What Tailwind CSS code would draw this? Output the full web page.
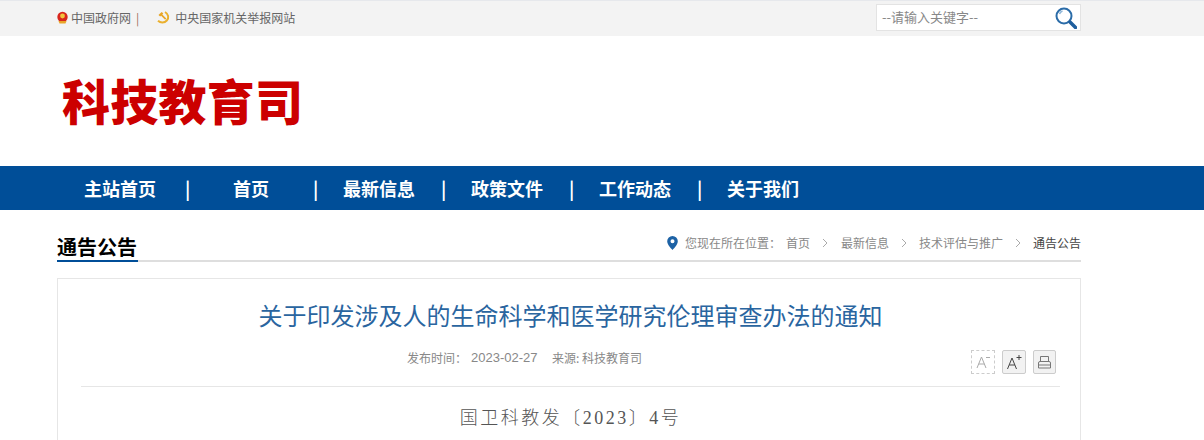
<!DOCTYPE html>
<html lang="zh-CN">
<head>
  <meta charset="UTF-8">
  <title>科技教育司</title>
  <script src="https://cdn.jsdelivr.net/npm/@tailwindcss/browser@4"></script>
</head>
<body class="bg-white overflow-hidden h-[440px] font-['Noto_Sans_CJK_SC','Liberation_Sans',sans-serif]">

  <!-- top bar -->
  <div class="h-9 bg-[#f3f3f3] border-t border-[#e6e8ec]">
    <div class="w-[1024px] ml-[57px] h-[35px] flex items-start justify-between">
      <div class="flex items-center text-xs text-[#666] h-[33px]">
        <svg class="w-[11px] h-[13px] mr-[3px]" viewBox="0 0 11 13">
          <circle cx="5.500" cy="6" r="5.200" fill="#d8261c"/>
          <circle cx="5.500" cy="5" r="2.400" fill="#f3c33c"/>
          <path d="M1.500 10h8l-1 2.500h-6z" fill="#e9a52a"/>
        </svg>
        <span>中国政府网</span>
        <span class="ml-[5px] text-[#a0705a]">|</span>
        <svg class="w-[13px] h-[13px] ml-[18px] mr-[5px]" viewBox="0 0 13 13" fill="none">
          <path d="M8 1c3.500 2 4.200 6 1.800 8.500C7.500 12 3.500 12 1 9.800" stroke="#eab02e" stroke-width="2"/>
          <path d="M3 2.500l1.800-1.500 1.500 1.500-1 1 4 4-1.200 1.200-4-4-1 .8L1.500 4z" fill="#e8a526"/>
        </svg>
        <span>中央国家机关举报网站</span>
      </div>
      <div class="mt-[3px] w-[205px] h-[27px] bg-white border border-[#e3e3e3] flex items-center justify-between pl-[5px] pr-[3px]">
        <span class="text-[13px] text-[#888] -mt-[2px]">--请输入关键字--</span>
        <svg class="w-[22px] h-[22px]" viewBox="0 0 22 22" fill="none">
          <circle cx="9" cy="9" r="7.500" stroke="#2b6ca8" stroke-width="2"/>
          <path d="M4.500 7a5 5 0 0 1 3-3" stroke="#8fb6d8" stroke-width="1.500"/>
          <path d="M15 15l5.500 5.500" stroke="#1f5f9e" stroke-width="3.500" stroke-linecap="round"/>
        </svg>
      </div>
    </div>
  </div>

  <!-- site title -->
  <div class="h-[130px] flex items-center pl-[62px]">
    <h1 class="text-5xl leading-none font-black text-[#cc0000] tracking-[0.25px] -mt-[4px]">科技教育司</h1>
  </div>

  <!-- nav -->
  <nav class="h-11 bg-[#004e98]">
    <ul class="flex ml-[56px] h-full items-center text-white font-bold text-lg">
      <li class="w-[128px] text-center leading-[22px] relative">主站首页<span class="absolute left-[129px] top-0 font-bold">|</span></li>
      <li class="w-[128px] text-center leading-[22px] relative left-[3px]">首页<span class="absolute left-[126px] top-0 font-bold">|</span></li>
      <li class="w-[128px] text-center leading-[22px] relative left-[3px]">最新信息<span class="absolute left-[126px] top-0 font-bold">|</span></li>
      <li class="w-[128px] text-center leading-[22px] relative left-[3px]">政策文件<span class="absolute left-[126px] top-0 font-bold">|</span></li>
      <li class="w-[128px] text-center leading-[22px] relative left-[3px]">工作动态<span class="absolute left-[126px] top-0 font-bold">|</span></li>
      <li class="w-[128px] text-center leading-[22px] relative left-[3px]">关于我们</li>
    </ul>
  </nav>

  <div class="w-[1024px] ml-[57px]">
    <!-- section head + breadcrumb -->
    <div class="h-[52px] border-b-2 border-[#dedede] flex items-end justify-between">
      <h2 class="text-xl leading-[26px] font-bold text-black border-b-2 border-[#004e98] -mb-[2px] w-[81px] whitespace-nowrap">通告公告</h2>
      <div class="flex items-center text-xs text-[#888] mb-[9px] whitespace-nowrap">
        <svg class="w-[11px] h-[14px] mr-[7px]" viewBox="0 0 11 14">
          <path fill-rule="evenodd" d="M5.500 0A5.300 5.300 0 0 0 .2 5.300C.2 9 5.500 14 5.500 14s5.300-5 5.300-8.700A5.300 5.300 0 0 0 5.500 0zm0 7.200a2 2 0 1 1 0-4 2 2 0 0 1 0 4z" fill="#1d62a5"/>
        </svg>
        <span>您现在所在位置：</span>
        <span class="ml-[5px]">首页</span>
        <span class="w-[31px] flex justify-center"><svg class="w-[6px] h-[10px]" viewBox="0 0 6 10" fill="none" stroke="#aaa"><path d="M1 1l4 4-4 4"/></svg></span>
        <span>最新信息</span>
        <span class="w-[30px] flex justify-center"><svg class="w-[6px] h-[10px]" viewBox="0 0 6 10" fill="none" stroke="#aaa"><path d="M1 1l4 4-4 4"/></svg></span>
        <span>技术评估与推广</span>
        <span class="w-[30px] flex justify-center"><svg class="w-[6px] h-[10px]" viewBox="0 0 6 10" fill="none" stroke="#aaa"><path d="M1 1l4 4-4 4"/></svg></span>
        <span class="text-[#444]">通告公告</span>
      </div>
    </div>

    <!-- article card -->
    <div class="mt-4 border border-[#e6e6e6] h-[300px] pl-[23px] pr-[20px]">
      <h3 class="text-2xl text-[#2a659f] text-center leading-8 mt-[20px]">关于印发涉及人的生命科学和医学研究伦理审查办法的通知</h3>
      <div class="relative h-[45px] border-b border-[#e6e6e6] mt-[11px]">
        <p class="flex items-center text-xs text-[#888] leading-[18px] whitespace-nowrap pt-[7px] pl-[326px]">
          <span class="w-[64px]">发布时间：</span>
          <span class="w-[81px] text-[13px] font-['Liberation_Sans']">2023-02-27</span>
          <span>来源: 科技教育司</span>
        </p>
        <div class="absolute right-[4px] top-[8px] flex gap-[7px]">
          <div class="w-6 h-6 border border-dashed border-[#ccc] flex items-center justify-center">
            <svg class="w-[16px] h-[16px]" viewBox="0 0 16 16" fill="none" stroke="#aaa"><path d="M2 14L6.500 3l4.500 11M3.800 10h5.500M11 3.500h4"/></svg>
          </div>
          <div class="w-6 h-6 border border-[#ccc] rounded-[2px] bg-[#f2f2f2] flex items-center justify-center">
            <svg class="w-[16px] h-[16px]" viewBox="0 0 16 16" fill="none" stroke="#444"><path d="M1.500 15L6 4l4.500 11M3.300 11h5.500M10.500 3.500h5M13 1v5"/></svg>
          </div>
          <div class="w-[23px] h-6 border border-[#ccc] rounded-[2px] bg-[#f2f2f2] flex items-center justify-center">
            <svg class="w-[15px] h-[15px]" viewBox="0 0 15 15" fill="none" stroke="#777"><path d="M3.500 7V1.500h8V7M1.500 13V8q0-1.500 1.500-1.500h9q1.500 0 1.500 1.500v5zM1.500 10h12"/></svg>
          </div>
        </div>
      </div>
      <p class="mt-[17px] text-center text-lg leading-7 text-[#555] font-['Liberation_Serif','Noto_Sans_CJK_SC',serif] font-light tracking-[2.500px]">国卫科教发〔2023〕4号</p>
    </div>
  </div>
</body>
</html>
